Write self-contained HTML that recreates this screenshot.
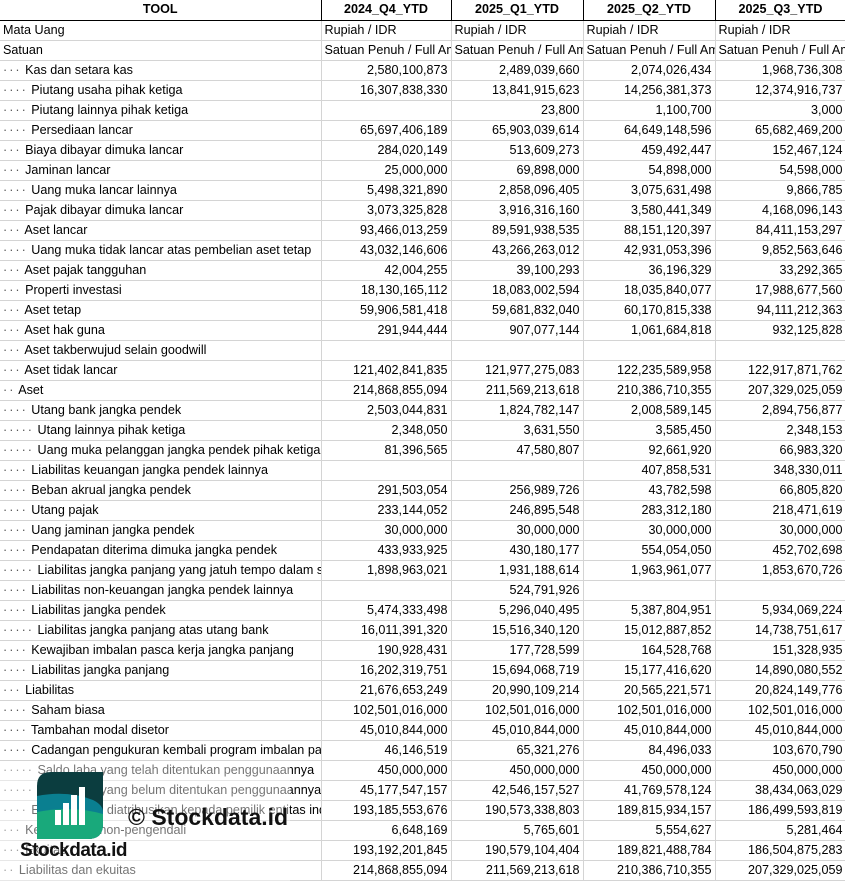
<!DOCTYPE html>
<html><head><meta charset="utf-8"><style>
*{margin:0;padding:0;box-sizing:border-box}
body{width:845px;height:881px;overflow:hidden;background:#fff;font-family:"Liberation Sans",Arial,sans-serif;font-size:12.6px;color:#000;position:relative}
table{border-collapse:collapse;table-layout:fixed;position:absolute;left:0;top:0;width:846px}
td{height:20px;border-right:1px solid #d4d4d4;border-bottom:1px solid #d4d4d4;white-space:nowrap;overflow:hidden;padding:0 3px;line-height:19px}
td.n{text-align:right}
tr.h td{font-weight:bold;text-align:center;border-right:1px solid #000;border-bottom:1px solid #000}
.d{color:#555;letter-spacing:2px}
</style></head><body>
<table>
<colgroup><col style="width:321px"><col style="width:130px"><col style="width:132px"><col style="width:132px"><col style="width:131px"></colgroup>
<tr class="h"><td>TOOL</td><td>2024_Q4_YTD</td><td>2025_Q1_YTD</td><td>2025_Q2_YTD</td><td>2025_Q3_YTD</td></tr>
<tr><td>Mata Uang</td><td>Rupiah / IDR</td><td>Rupiah / IDR</td><td>Rupiah / IDR</td><td>Rupiah / IDR</td></tr>
<tr><td>Satuan</td><td>Satuan Penuh / Full Amount</td><td>Satuan Penuh / Full Amount</td><td>Satuan Penuh / Full Amount</td><td>Satuan Penuh / Full Amount</td></tr>
<tr><td><span class="d">···</span> Kas dan setara kas</td><td class="n">2,580,100,873</td><td class="n">2,489,039,660</td><td class="n">2,074,026,434</td><td class="n">1,968,736,308</td></tr>
<tr><td><span class="d">····</span> Piutang usaha pihak ketiga</td><td class="n">16,307,838,330</td><td class="n">13,841,915,623</td><td class="n">14,256,381,373</td><td class="n">12,374,916,737</td></tr>
<tr><td><span class="d">····</span> Piutang lainnya pihak ketiga</td><td class="n"></td><td class="n">23,800</td><td class="n">1,100,700</td><td class="n">3,000</td></tr>
<tr><td><span class="d">····</span> Persediaan lancar</td><td class="n">65,697,406,189</td><td class="n">65,903,039,614</td><td class="n">64,649,148,596</td><td class="n">65,682,469,200</td></tr>
<tr><td><span class="d">···</span> Biaya dibayar dimuka lancar</td><td class="n">284,020,149</td><td class="n">513,609,273</td><td class="n">459,492,447</td><td class="n">152,467,124</td></tr>
<tr><td><span class="d">···</span> Jaminan lancar</td><td class="n">25,000,000</td><td class="n">69,898,000</td><td class="n">54,898,000</td><td class="n">54,598,000</td></tr>
<tr><td><span class="d">····</span> Uang muka lancar lainnya</td><td class="n">5,498,321,890</td><td class="n">2,858,096,405</td><td class="n">3,075,631,498</td><td class="n">9,866,785</td></tr>
<tr><td><span class="d">···</span> Pajak dibayar dimuka lancar</td><td class="n">3,073,325,828</td><td class="n">3,916,316,160</td><td class="n">3,580,441,349</td><td class="n">4,168,096,143</td></tr>
<tr><td><span class="d">···</span> Aset lancar</td><td class="n">93,466,013,259</td><td class="n">89,591,938,535</td><td class="n">88,151,120,397</td><td class="n">84,411,153,297</td></tr>
<tr><td><span class="d">····</span> Uang muka tidak lancar atas pembelian aset tetap</td><td class="n">43,032,146,606</td><td class="n">43,266,263,012</td><td class="n">42,931,053,396</td><td class="n">9,852,563,646</td></tr>
<tr><td><span class="d">···</span> Aset pajak tangguhan</td><td class="n">42,004,255</td><td class="n">39,100,293</td><td class="n">36,196,329</td><td class="n">33,292,365</td></tr>
<tr><td><span class="d">···</span> Properti investasi</td><td class="n">18,130,165,112</td><td class="n">18,083,002,594</td><td class="n">18,035,840,077</td><td class="n">17,988,677,560</td></tr>
<tr><td><span class="d">···</span> Aset tetap</td><td class="n">59,906,581,418</td><td class="n">59,681,832,040</td><td class="n">60,170,815,338</td><td class="n">94,111,212,363</td></tr>
<tr><td><span class="d">···</span> Aset hak guna</td><td class="n">291,944,444</td><td class="n">907,077,144</td><td class="n">1,061,684,818</td><td class="n">932,125,828</td></tr>
<tr><td><span class="d">···</span> Aset takberwujud selain goodwill</td><td></td><td></td><td></td><td></td></tr>
<tr><td><span class="d">···</span> Aset tidak lancar</td><td class="n">121,402,841,835</td><td class="n">121,977,275,083</td><td class="n">122,235,589,958</td><td class="n">122,917,871,762</td></tr>
<tr><td><span class="d">··</span> Aset</td><td class="n">214,868,855,094</td><td class="n">211,569,213,618</td><td class="n">210,386,710,355</td><td class="n">207,329,025,059</td></tr>
<tr><td><span class="d">····</span> Utang bank jangka pendek</td><td class="n">2,503,044,831</td><td class="n">1,824,782,147</td><td class="n">2,008,589,145</td><td class="n">2,894,756,877</td></tr>
<tr><td><span class="d">·····</span> Utang lainnya pihak ketiga</td><td class="n">2,348,050</td><td class="n">3,631,550</td><td class="n">3,585,450</td><td class="n">2,348,153</td></tr>
<tr><td><span class="d">·····</span> Uang muka pelanggan jangka pendek pihak ketiga</td><td class="n">81,396,565</td><td class="n">47,580,807</td><td class="n">92,661,920</td><td class="n">66,983,320</td></tr>
<tr><td><span class="d">····</span> Liabilitas keuangan jangka pendek lainnya</td><td class="n"></td><td class="n"></td><td class="n">407,858,531</td><td class="n">348,330,011</td></tr>
<tr><td><span class="d">····</span> Beban akrual jangka pendek</td><td class="n">291,503,054</td><td class="n">256,989,726</td><td class="n">43,782,598</td><td class="n">66,805,820</td></tr>
<tr><td><span class="d">····</span> Utang pajak</td><td class="n">233,144,052</td><td class="n">246,895,548</td><td class="n">283,312,180</td><td class="n">218,471,619</td></tr>
<tr><td><span class="d">····</span> Uang jaminan jangka pendek</td><td class="n">30,000,000</td><td class="n">30,000,000</td><td class="n">30,000,000</td><td class="n">30,000,000</td></tr>
<tr><td><span class="d">····</span> Pendapatan diterima dimuka jangka pendek</td><td class="n">433,933,925</td><td class="n">430,180,177</td><td class="n">554,054,050</td><td class="n">452,702,698</td></tr>
<tr><td><span class="d">·····</span> Liabilitas jangka panjang yang jatuh tempo dalam satu tahun</td><td class="n">1,898,963,021</td><td class="n">1,931,188,614</td><td class="n">1,963,961,077</td><td class="n">1,853,670,726</td></tr>
<tr><td><span class="d">····</span> Liabilitas non-keuangan jangka pendek lainnya</td><td class="n"></td><td class="n">524,791,926</td><td class="n"></td><td class="n"></td></tr>
<tr><td><span class="d">····</span> Liabilitas jangka pendek</td><td class="n">5,474,333,498</td><td class="n">5,296,040,495</td><td class="n">5,387,804,951</td><td class="n">5,934,069,224</td></tr>
<tr><td><span class="d">·····</span> Liabilitas jangka panjang atas utang bank</td><td class="n">16,011,391,320</td><td class="n">15,516,340,120</td><td class="n">15,012,887,852</td><td class="n">14,738,751,617</td></tr>
<tr><td><span class="d">····</span> Kewajiban imbalan pasca kerja jangka panjang</td><td class="n">190,928,431</td><td class="n">177,728,599</td><td class="n">164,528,768</td><td class="n">151,328,935</td></tr>
<tr><td><span class="d">····</span> Liabilitas jangka panjang</td><td class="n">16,202,319,751</td><td class="n">15,694,068,719</td><td class="n">15,177,416,620</td><td class="n">14,890,080,552</td></tr>
<tr><td><span class="d">···</span> Liabilitas</td><td class="n">21,676,653,249</td><td class="n">20,990,109,214</td><td class="n">20,565,221,571</td><td class="n">20,824,149,776</td></tr>
<tr><td><span class="d">····</span> Saham biasa</td><td class="n">102,501,016,000</td><td class="n">102,501,016,000</td><td class="n">102,501,016,000</td><td class="n">102,501,016,000</td></tr>
<tr><td><span class="d">····</span> Tambahan modal disetor</td><td class="n">45,010,844,000</td><td class="n">45,010,844,000</td><td class="n">45,010,844,000</td><td class="n">45,010,844,000</td></tr>
<tr><td><span class="d">····</span> Cadangan pengukuran kembali program imbalan pasti</td><td class="n">46,146,519</td><td class="n">65,321,276</td><td class="n">84,496,033</td><td class="n">103,670,790</td></tr>
<tr><td><span class="d">·····</span> Saldo laba yang telah ditentukan penggunaannya</td><td class="n">450,000,000</td><td class="n">450,000,000</td><td class="n">450,000,000</td><td class="n">450,000,000</td></tr>
<tr><td><span class="d">·····</span> Saldo laba yang belum ditentukan penggunaannya</td><td class="n">45,177,547,157</td><td class="n">42,546,157,527</td><td class="n">41,769,578,124</td><td class="n">38,434,063,029</td></tr>
<tr><td><span class="d">····</span> Ekuitas yang diatribusikan kepada pemilik entitas induk</td><td class="n">193,185,553,676</td><td class="n">190,573,338,803</td><td class="n">189,815,934,157</td><td class="n">186,499,593,819</td></tr>
<tr><td><span class="d">···</span> Kepentingan non-pengendali</td><td class="n">6,648,169</td><td class="n">5,765,601</td><td class="n">5,554,627</td><td class="n">5,281,464</td></tr>
<tr><td><span class="d">···</span> Ekuitas</td><td class="n">193,192,201,845</td><td class="n">190,579,104,404</td><td class="n">189,821,488,784</td><td class="n">186,504,875,283</td></tr>
<tr><td><span class="d">··</span> Liabilitas dan ekuitas</td><td class="n">214,868,855,094</td><td class="n">211,569,213,618</td><td class="n">210,386,710,355</td><td class="n">207,329,025,059</td></tr>
</table>
<div style="position:absolute;left:0;top:761px;width:290px;height:120px;background:rgba(255,255,255,0.45)"></div>
<svg style="position:absolute;left:37px;top:772px" width="66" height="67" viewBox="0 0 66 67">
<defs><clipPath id="c"><path d="M14 0H66V52Q66 67 51 67H0V14Q0 0 14 0Z"/></clipPath></defs>
<g clip-path="url(#c)">
<rect width="66" height="67" fill="#0b3d3f"/>
<path d="M0 24Q30 18 56 28Q66 33 66 40V67H0Z" fill="#0a7f90"/>
<path d="M0 40Q35 33 66 42V67H0Z" fill="#19a97b"/>
</g>
<rect x="18" y="38" width="6" height="15" fill="#fff"/>
<rect x="26" y="31" width="6" height="22" fill="#fff"/>
<rect x="34" y="23" width="6" height="30" fill="#fff"/>
<rect x="42" y="15" width="6" height="38" fill="#fff"/>
</svg>
<div style="position:absolute;left:128px;top:804px;font-size:23px;font-weight:bold;color:#111;white-space:nowrap">© Stockdata.id</div>
<div style="position:absolute;left:20px;top:840px;font-size:19px;font-weight:bold;color:#111;white-space:nowrap;letter-spacing:-0.5px">Stockdata.id</div>
</body></html>
